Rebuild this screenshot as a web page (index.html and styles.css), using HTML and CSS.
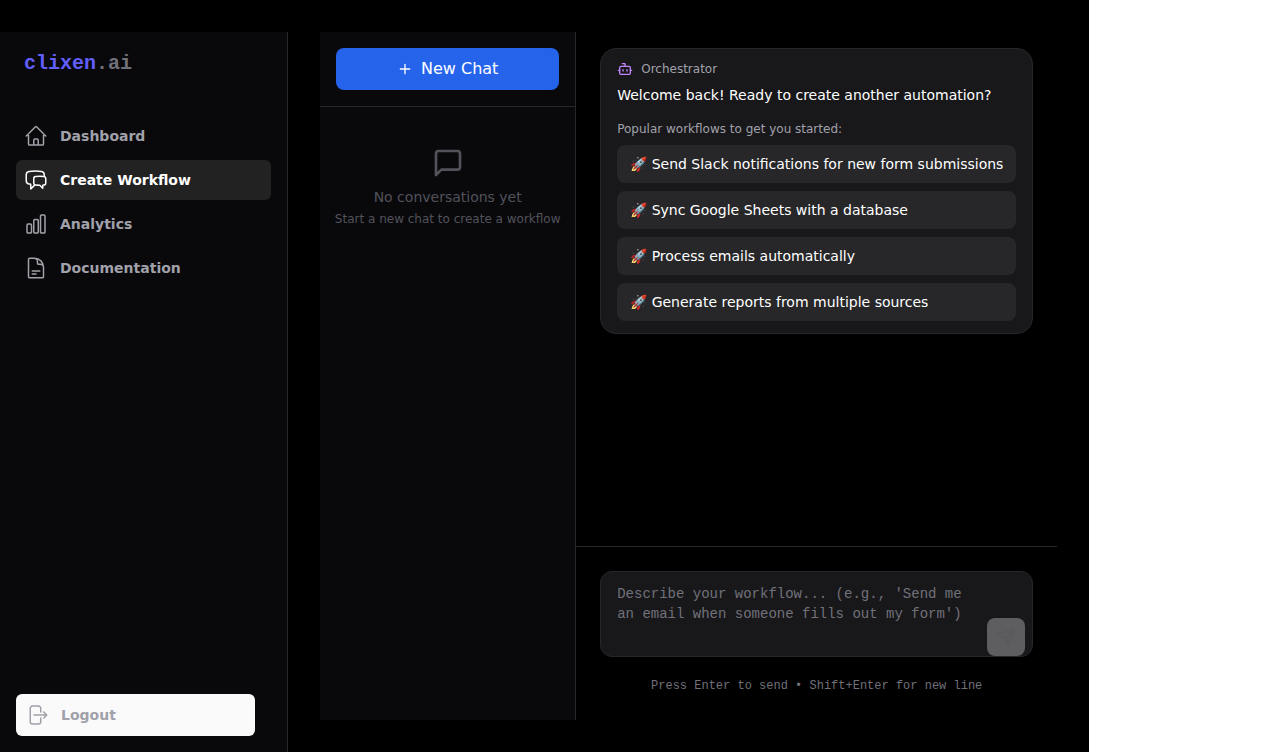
FILE: index.html
```html
<!DOCTYPE html>
<html lang="en">
<head>
<meta charset="utf-8">
<title>clixen.ai</title>
<link rel="stylesheet" href="styles.css">
</head>
<body>
<div class="app">
  <aside class="sidebar">
    <div class="logo"><span class="logo-name">clixen</span><span class="logo-tld">.ai</span></div>
    <nav class="nav">
      <a class="nav-item"><svg class="icon" viewBox="0 0 24 24"><path d="m2.25 12 8.954-8.955c.44-.439 1.152-.439 1.591 0L21.75 12M4.5 9.75v10.125c0 .621.504 1.125 1.125 1.125H9.75v-4.875c0-.621.504-1.125 1.125-1.125h2.25c.621 0 1.125.504 1.125 1.125V21h4.125c.621 0 1.125-.504 1.125-1.125V9.75M8.25 21h8.25"/></svg>Dashboard</a>
      <a class="nav-item active"><svg class="icon" viewBox="0 0 24 24"><path d="M20.25 8.511c.884.284 1.5 1.128 1.5 2.097v4.286c0 1.136-.847 2.1-1.98 2.193-.34.027-.68.052-1.02.072v3.091l-3-3c-1.354 0-2.694-.055-4.02-.163a2.115 2.115 0 0 1-.825-.242m9.345-8.334a2.126 2.126 0 0 0-.476-.095 48.64 48.64 0 0 0-8.048 0c-1.131.094-1.976 1.057-1.976 2.192v4.286c0 .837.46 1.58 1.155 1.951m9.345-8.334V6.637c0-1.621-1.152-3.026-2.76-3.235A48.455 48.455 0 0 0 11.25 3c-2.115 0-4.198.137-6.24.402-1.608.209-2.76 1.614-2.76 3.235v6.226c0 1.621 1.152 3.026 2.76 3.235.577.075 1.157.14 1.74.194V21l4.155-4.155"/></svg>Create Workflow</a>
      <a class="nav-item"><svg class="icon" viewBox="0 0 24 24"><path d="M3 13.125C3 12.504 3.504 12 4.125 12h2.25c.621 0 1.125.504 1.125 1.125v6.75C7.5 20.496 6.996 21 6.375 21h-2.25A1.125 1.125 0 0 1 3 19.875v-6.75ZM9.75 8.625c0-.621.504-1.125 1.125-1.125h2.25c.621 0 1.125.504 1.125 1.125v11.25c0 .621-.504 1.125-1.125 1.125h-2.25a1.125 1.125 0 0 1-1.125-1.125V8.625ZM16.5 4.125c0-.621.504-1.125 1.125-1.125h2.25C20.496 3 21 3.504 21 4.125v15.75c0 .621-.504 1.125-1.125 1.125h-2.25a1.125 1.125 0 0 1-1.125-1.125V4.125Z"/></svg>Analytics</a>
      <a class="nav-item"><svg class="icon" viewBox="0 0 24 24"><path d="M19.5 14.25v-2.625a3.375 3.375 0 0 0-3.375-3.375h-1.5A1.125 1.125 0 0 1 13.5 7.125v-1.5a3.375 3.375 0 0 0-3.375-3.375H8.25m0 12.75h7.5m-7.5 3H12M10.5 2.25H5.625c-.621 0-1.125.504-1.125 1.125v17.25c0 .621.504 1.125 1.125 1.125h12.75c.621 0 1.125-.504 1.125-1.125V11.25a9 9 0 0 0-9-9Z"/></svg>Documentation</a>
    </nav>
    <button class="logout"><svg class="icon" viewBox="0 0 24 24"><path d="M15.75 9V5.25A2.25 2.25 0 0 0 13.5 3h-6a2.25 2.25 0 0 0-2.25 2.25v13.5A2.25 2.25 0 0 0 7.5 21h6a2.25 2.25 0 0 0 2.25-2.25V15m3 0 3-3m0 0-3-3m3 3H9"/></svg>Logout</button>
  </aside>
  <main class="workspace">
    <section class="history">
      <div class="history-head">
        <button class="new-chat"><svg class="icon-sm" viewBox="0 0 24 24"><path d="M5 12h14M12 5v14"/></svg><span class="new-chat-label">New Chat</span></button>
      </div>
      <div class="empty">
        <svg class="icon-lg" viewBox="0 0 24 24"><path d="M21 15a2 2 0 0 1-2 2H7l-4 4V5a2 2 0 0 1 2-2h14a2 2 0 0 1 2 2z"/></svg>
        <p class="empty-title">No conversations yet</p>
        <p class="empty-hint">Start a new chat to create a workflow</p>
      </div>
    </section>
    <section class="chat">
      <div class="messages">
        <article class="message">
          <header class="message-head"><svg class="icon-sm bot" viewBox="0 0 24 24"><path d="M12 8V4H8"/><rect width="16" height="12" x="4" y="8" rx="2"/><path d="M2 14h2M20 14h2M15 13v2M9 13v2"/></svg>Orchestrator</header>
          <p class="message-text">Welcome back! Ready to create another automation?</p>
          <p class="message-sub">Popular workflows to get you started:</p>
          <div class="suggestions">
            <button class="suggestion">🚀 Send Slack notifications for new form submissions</button>
            <button class="suggestion">🚀 Sync Google Sheets with a database</button>
            <button class="suggestion">🚀 Process emails automatically</button>
            <button class="suggestion">🚀 Generate reports from multiple sources</button>
          </div>
        </article>
      </div>
      <footer class="composer">
        <div class="field">
          <textarea class="input" placeholder="Describe your workflow... (e.g., 'Send me an email when someone fills out my form')"></textarea>
          <button class="send" aria-label="Send"><svg class="icon-send" viewBox="0 0 24 24"><path d="m22 2-7 20-4-9-9-4ZM22 2 11 13"/></svg></button>
        </div>
        <p class="keys">Press Enter to send • Shift+Enter for new line</p>
      </footer>
    </section>
  </main>
</div>
</body>
</html>
```
FILE: styles.css
```css
* { box-sizing: border-box; }
body, p { margin: 0; }
body {
  background: #fff;
  font-family: "DejaVu Sans", sans-serif;
  overflow: hidden;
}
button { border: 0; font-family: inherit; }
svg {
  display: block;
  flex: none;
  fill: none;
  stroke: currentColor;
  stroke-width: 2;
  stroke-linecap: round;
  stroke-linejoin: round;
}
.icon { width: 24px; height: 24px; stroke-width: 1.5; }
.icon-sm { width: 16px; height: 16px; }
.icon-lg { width: 32px; height: 32px; }
.icon-send { width: 20px; height: 20px; }

.app {
  display: flex;
  width: 1089.2px;
  height: 752px;
  padding-top: 32px;
  background: #000;
}
.sidebar {
  display: flex;
  flex: none;
  flex-direction: column;
  width: 288px;
  padding: 16px;
  background: #09090b;
  border-right: 1px solid #27272a;
}
.logo {
  padding: 1px 0 0 8px;
  font: bold 20px/30px "Liberation Mono", monospace;
}
.logo-name { color: #615fff; }
.logo-tld { color: #71717a; }
.nav {
  display: flex;
  flex-direction: column;
  gap: 4px;
  margin-top: 37px;
}
.nav-item {
  display: flex;
  align-items: center;
  gap: 12px;
  height: 40px;
  padding: 0 8px;
  border-radius: 6px;
  color: #a1a1aa;
  font-size: 14px;
  font-weight: bold;
}
.nav-item.active { background: #222; color: #fff; }
.logout {
  display: flex;
  align-items: center;
  gap: 12px;
  width: 239px;
  height: 42px;
  margin-top: auto;
  padding: 0 9px;
  border-radius: 6px;
  background: #fafafa;
  color: #a1a1aa;
  font-size: 14px;
  font-weight: bold;
}

.workspace {
  display: flex;
  flex: 1;
  min-width: 0;
  padding: 0 32px 32px 32.2px;
}
.history {
  width: 256px;
  flex: none;
  background: #09090b;
  border-right: 1px solid #27272a;
}
.history-head {
  padding: 16px;
  border-bottom: 1px solid #27272a;
}
.new-chat {
  display: flex;
  align-items: center;
  justify-content: center;
  gap: 8px;
  width: 100%;
  height: 42px;
  border-radius: 8px;
  background: #2563eb;
  color: #fff;
  font-size: 16px;
}
.new-chat-label { padding-bottom: 2px; }
.empty {
  display: flex;
  flex-direction: column;
  align-items: center;
  padding-top: 40px;
  color: #52525b;
  white-space: nowrap;
}
.empty-title { margin-top: 8px; font-size: 14px; line-height: 20px; }
.empty-hint { margin-top: 4px; font-size: 12px; line-height: 16px; }

.chat {
  display: flex;
  flex: 1;
  flex-direction: column;
  min-width: 0;
}
.messages { flex: 1; padding: 16px 24px; }
.message {
  height: 286px;
  padding: 12px 16px;
  background: #18181b;
  border: 1px solid #27272a;
  border-radius: 16px;
}
.message-head {
  display: flex;
  align-items: center;
  gap: 8px;
  color: #a1a1aa;
  font-size: 12px;
  line-height: 16px;
}
.bot { color: #c084fc; }
.message-text { margin-top: 7px; color: #fff; font-size: 14px; line-height: 23px; }
.message-sub { margin-top: 14px; color: #a1a1aa; font-size: 12px; line-height: 16px; }
.suggestions {
  display: flex;
  flex-direction: column;
  gap: 8px;
  margin-top: 8px;
}
.suggestion {
  height: 38px;
  padding: 0 13px;
  background: #27272a;
  border-radius: 8px;
  color: #fff;
  font-size: 14px;
  text-align: left;
  white-space: nowrap;
}
.composer {
  height: 174px;
  padding: 24px;
  border-top: 1px solid #27272a;
}
.field { position: relative; height: 86px; }
.input {
  display: block;
  width: 100%;
  height: 86px;
  padding: 12px 48px 12px 16px;
  background: #18181b;
  border: 1px solid #27272a;
  border-radius: 12px;
  font: 14px/20px "Liberation Mono", monospace;
  resize: none;
  overflow: hidden;
}
.input::placeholder { color: #71717a; }
.send {
  position: absolute;
  right: 8px;
  bottom: 1px;
  display: grid;
  place-items: center;
  width: 38px;
  height: 38px;
  padding: 0;
  background: #5e5e60;
  border-radius: 8px;
  color: #5a5a5d;
}
.keys {
  margin-top: 21px;
  color: #71717a;
  font: 12px/16px "Liberation Mono", monospace;
  text-align: center;
}
```
